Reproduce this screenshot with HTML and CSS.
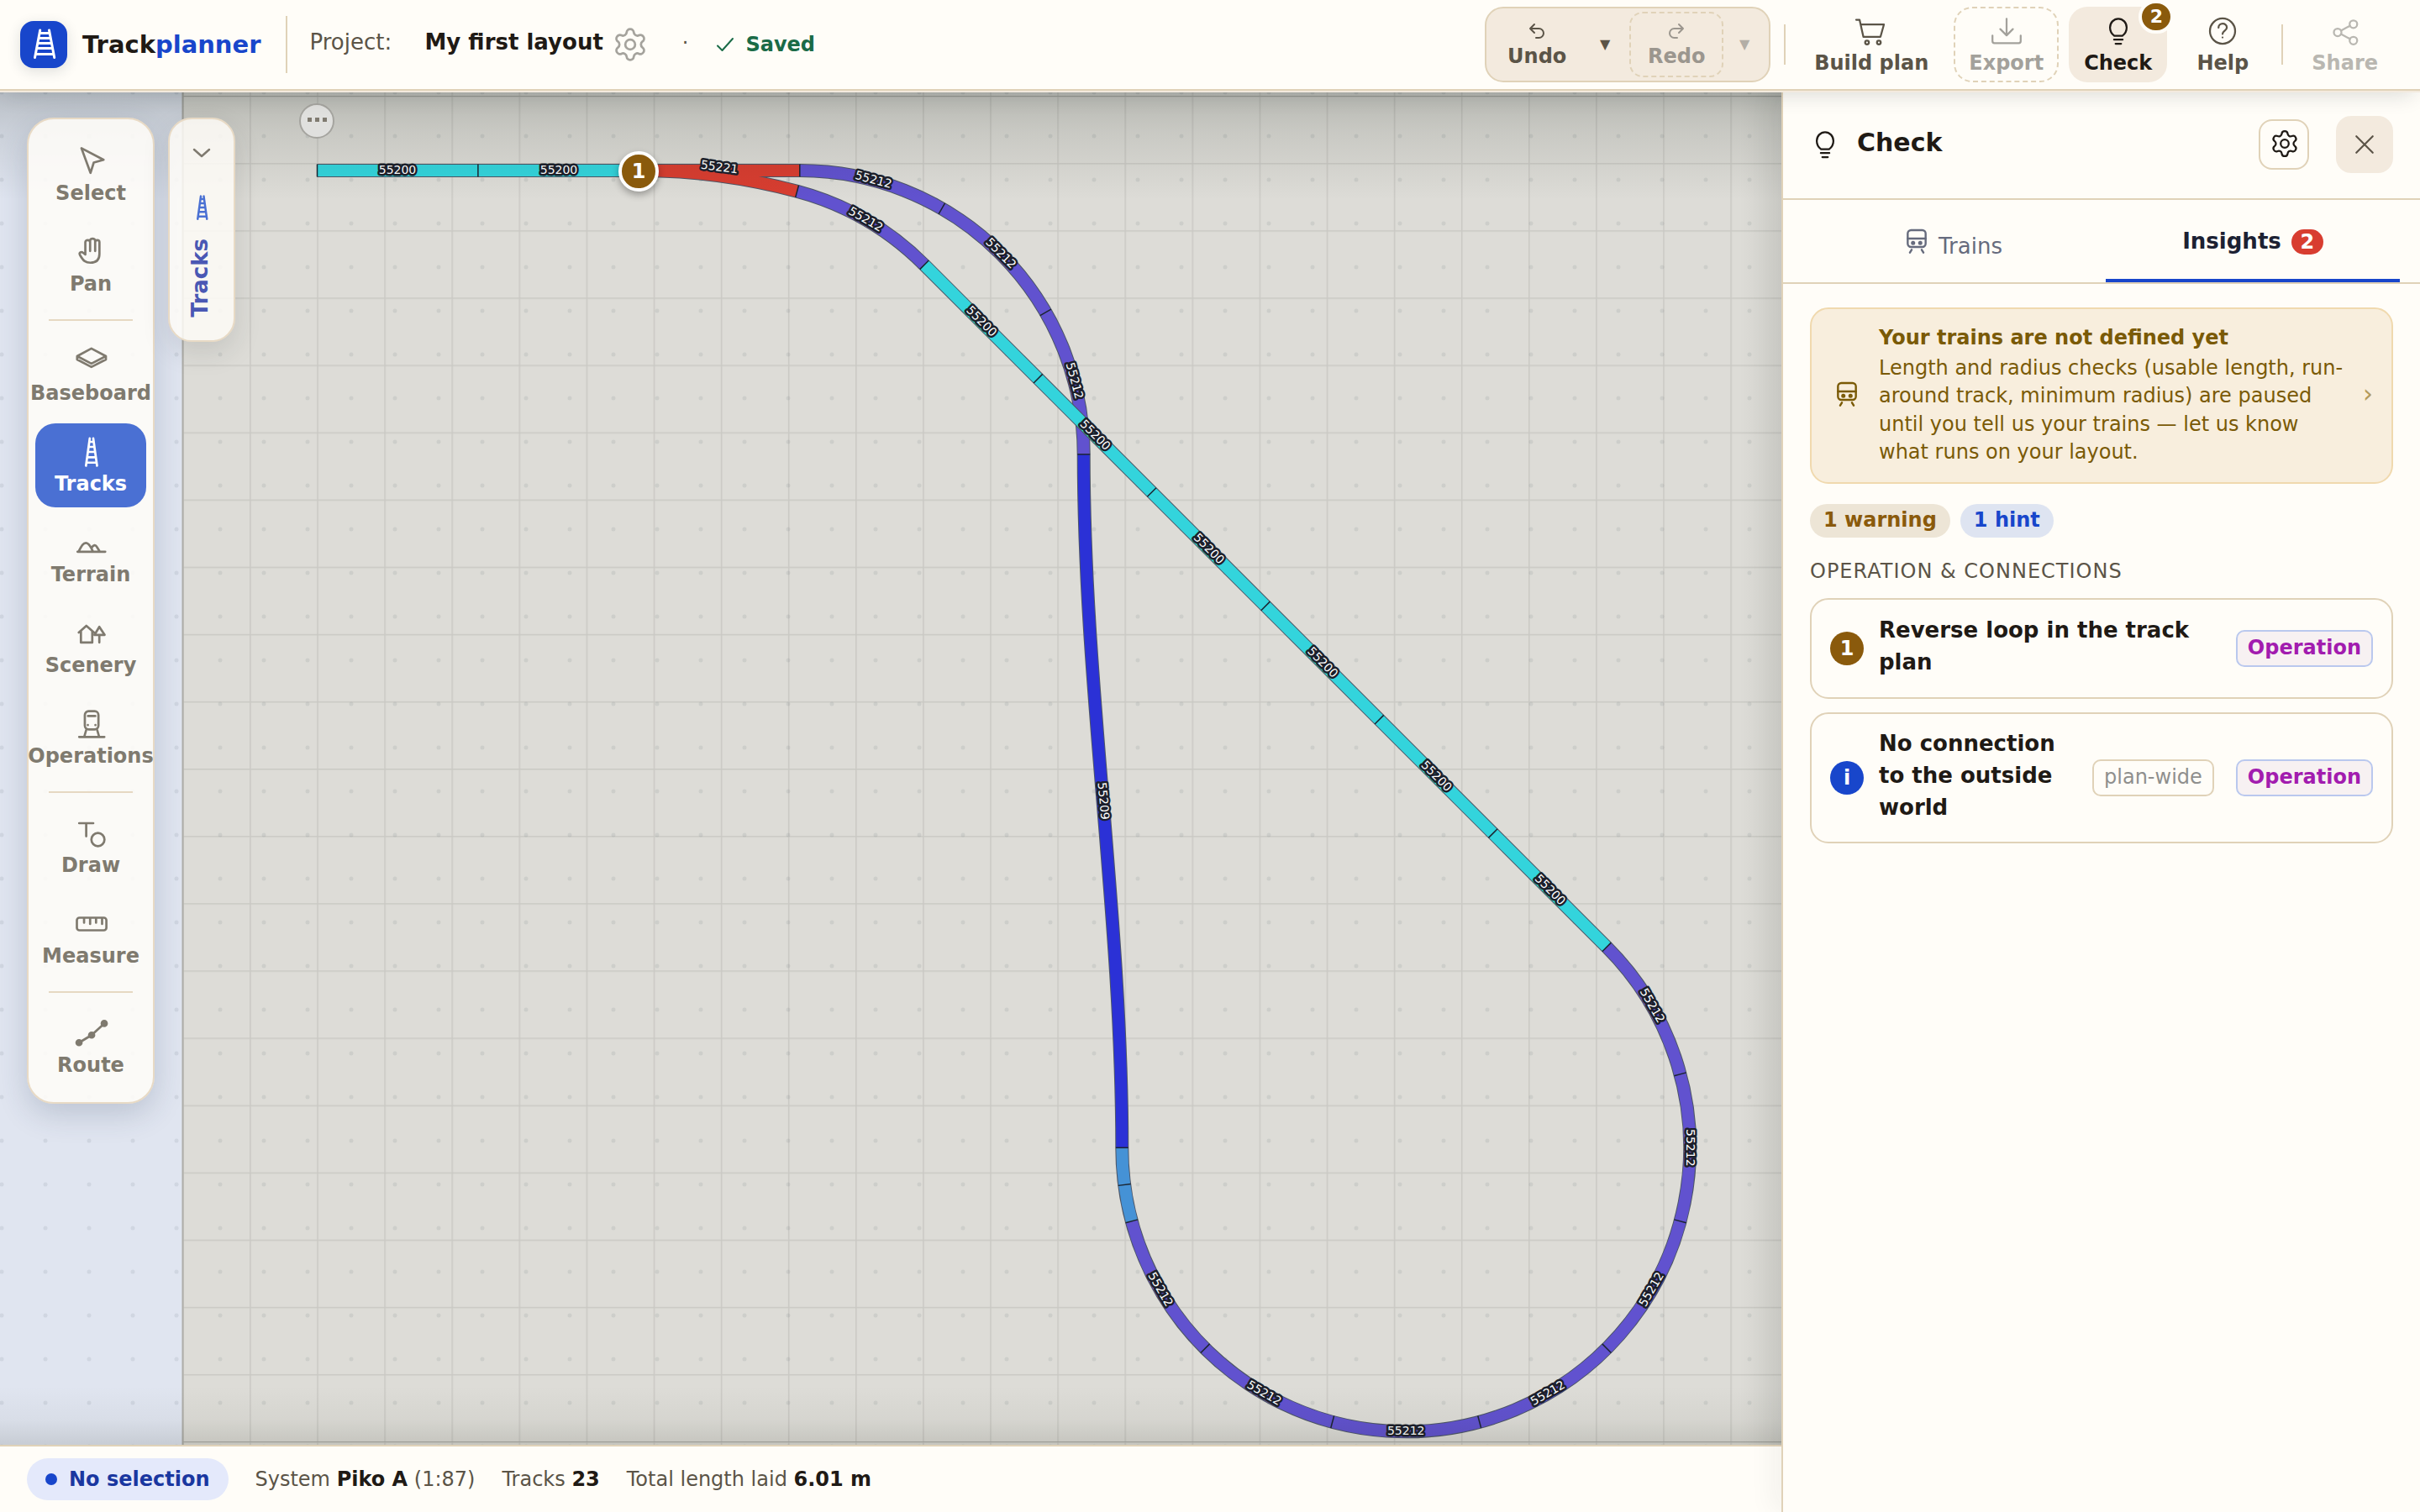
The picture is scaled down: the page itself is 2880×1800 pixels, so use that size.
FILE: index.html
```html
<!DOCTYPE html>
<html lang="en">
<head>
<meta charset="utf-8">
<title>Trackplanner – My first layout</title>
<meta name="viewport" content="width=device-width, initial-scale=1">
<link rel="stylesheet" href="styles.css">
</head>
<body>
<svg class="sprite" aria-hidden="true">
  <symbol id="i-track" viewBox="0 0 24 24"><path d="M11.2 1.3 8.2 23M14 1.3 17 23M11 4h3.4M10.4 8h4.4M9.8 12h5.6M9.2 16.200h6.800M8.600 20.500h8"/></symbol>
  <symbol id="i-gear" viewBox="0 0 24 24"><path d="M9.671 4.136a2.34 2.34 0 0 1 4.659 0 2.34 2.34 0 0 0 3.319 1.915 2.34 2.34 0 0 1 2.33 4.033 2.34 2.34 0 0 0 0 3.831 2.34 2.34 0 0 1-2.33 4.033 2.34 2.34 0 0 0-3.319 1.915 2.34 2.34 0 0 1-4.659 0 2.34 2.34 0 0 0-3.32-1.915 2.34 2.34 0 0 1-2.33-4.033 2.34 2.34 0 0 0 0-3.831A2.34 2.34 0 0 1 6.35 6.051a2.34 2.34 0 0 0 3.319-1.915"/><circle cx="12" cy="12" r="3.2"/></symbol>
  <symbol id="i-bulb" viewBox="0 0 24 24"><path d="M8.800 15.800C6.600 14.200 5.400 11.800 5.400 9.200a6.600 7 0 0 1 13.200 0c0 2.600-1.200 5-3.400 6.600zM8.600 18.800h6.800M9.800 22h4.400"/></symbol>
  <symbol id="i-train" viewBox="0 0 24 24"><rect x="4" y="3" width="16" height="15" rx="3"/><path d="M4 10.500h16M7.500 20.500 6 23M16.500 20.500 18 23"/><circle cx="8.800" cy="14.500" r="1"/><circle cx="15.200" cy="14.500" r="1"/></symbol>
</svg>

<div class="app">
  <header class="topbar">
    <a class="brand" href="#">
      <svg class="brand-mark" viewBox="0 0 56 56" aria-hidden="true"><path d="M23.700 11 17.500 43.500M34.500 11l6.200 32.500M23 14.600h12M22 20.600h14M21 26.600h16.500M20 32.600h18.500M18.600 39.500h21"/></svg>
      <span>Track<span class="brand-accent">planner</span></span>
    </a>
    <div class="project">
      <span class="project-label">Project:</span>
      <span class="project-name">My first layout</span>
      <button class="gear" type="button" aria-label="Project settings"><svg class="icon"><use href="#i-gear"/></svg></button>
      <span class="dot-sep">·</span>
      <span class="saved"><svg viewBox="0 0 24 24" aria-hidden="true"><path d="m3 13.500 5.500 5.500L21 5"/></svg>Saved</span>
    </div>
    <nav class="actions" aria-label="Plan actions">
      <div class="history">
        <button class="hist" type="button"><svg class="icon" viewBox="0 0 24 24"><path d="M9 14 4 9l5-5M4 9h10.500a5.500 5.500 0 0 1 0 11H11"/></svg>Undo</button>
        <button class="caret" type="button" aria-label="Undo list">▼</button>
        <button class="hist hist-off" type="button" disabled><svg class="icon" viewBox="0 0 24 24"><path d="m15 14 5-5-5-5M20 9H9.500a5.500 5.500 0 0 0 0 11H13"/></svg>Redo</button>
        <button class="caret" type="button" aria-label="Redo list" disabled>▼</button>
      </div>
      <span class="rule"></span>
      <div class="group">
        <button class="action" type="button"><svg class="icon" viewBox="0 0 24 24"><path d="M0 3h2.700l3 13.500h13.600L22 6.800H3.600"/><circle cx="8.600" cy="21" r="1.500"/><circle cx="18" cy="21" r="1.500"/></svg>Build plan</button>
        <button class="action action-dashed" type="button" disabled><svg class="icon" viewBox="0 0 24 24"><path d="M12 2.200v13M7 10.400l5 5 5-5M.800 15.500v4.500q0 1.500 1.500 1.500h19.400q1.500 0 1.500-1.500v-4.500"/></svg>Export</button>
        <button class="action action-on" type="button"><svg class="icon"><use href="#i-bulb"/></svg>Check<span class="count">2</span></button>
        <button class="action" type="button"><svg class="icon" viewBox="0 0 24 24"><circle cx="12" cy="12" r="10"/><path d="M8.800 9.300c0-4.200 6.600-4.200 6.600-.200 0 2.600-3.400 2.600-3.400 5.200"/><path d="M12 17v.010"/></svg>Help</button>
      </div>
      <span class="rule"></span>
      <button class="action" type="button" disabled><svg class="icon" viewBox="0 0 24 24"><circle cx="18.500" cy="6.500" r="3"/><circle cx="6" cy="13" r="3"/><circle cx="18.500" cy="19.500" r="3"/><path d="M8.600 11.600 15.800 7.800M8.600 14.400l7.200 3.800"/></svg>Share</button>
    </nav>
  </header>

  <div class="workspace">
    <section class="plan-side">
      <main class="stage">
        <svg class="canvas" aria-label="Track plan">
          <defs>
            <pattern id="grid" width="80.100" height="80.100" patternUnits="userSpaceOnUse" x="217" y="6"><path class="grid-line" d="M.800 0V81M0 .800H81"/></pattern>
            <pattern id="dots" width="52" height="52" patternUnits="userSpaceOnUse" x="-24" y="-24"><circle class="dot" cx="26" cy="26" r="2.500"/></pattern>
            <path id="joint" d="M0-7.500V7.500"/>
          </defs>
          <rect class="board" x="217" width="100%" height="100%"/>
          <rect fill="url(#grid)" x="217" width="100%" height="100%"/>
          <path class="board-edge" d="M217.500 0V2000"/>
          <path class="board-edge board-edge-soft" d="M217 6.500H4000M217 1608.500H4000"/>
          <rect fill="url(#dots)" width="100%" height="100%"/>
          <g transform="translate(0 -108)">
            <g class="rail rail-edge">
              <path d="M377.500 203H951.800"/><path d="M760.400 203A727.300 727.300 0 0 1 948.600 227.800"/>
              <path d="M951.800 203A337.900 337.900 0 0 1 1289.700 540.900"/>
              <path d="M1289.700 540.900C1289.700 816 1335.300 1091 1335.300 1366.300"/>
              <path d="M948.600 227.800A337.900 337.900 0 0 1 1100 315.300"/>
              <path d="M1912.100 1127.400A337.900 337.900 0 1 1 1335.300 1366.300"/>
            </g>
            <path class="rail cyan" d="M377.500 203H760.400"/>
            <path class="rail red" d="M760.400 203H951.800M760.400 203A727.300 727.300 0 0 1 948.600 227.800"/>
            <path class="rail violet" d="M951.800 203A337.900 337.900 0 0 1 1289.700 540.900"/>
            <path class="rail blue" d="M1289.700 540.900C1289.700 816 1335.300 1091 1335.300 1366.300"/>
            <path class="rail sky" d="M1346.800 1453.800A337.900 337.900 0 0 1 1335.300 1366.300"/>
            <path class="rail violet" d="M948.600 227.800A337.900 337.900 0 0 1 1100 315.300"/>
            <path class="rail violet" d="M1912.100 1127.400A337.900 337.900 0 1 1 1346.800 1453.800"/>
            <path class="rail rail-edge" d="M1100 315.300 1912.100 1127.400"/>
            <path class="rail cyan" d="M1100 315.300 1912.100 1127.400"/>
            <g class="joints">
              <use href="#joint" transform="translate(377.500 203)"/><use href="#joint" transform="translate(568.900 203)"/><use href="#joint" transform="translate(951.800 203)"/>
              <use href="#joint" transform="translate(948.600 227.800) rotate(15)"/><use href="#joint" transform="translate(1120.800 248.300) rotate(30)"/><use href="#joint" transform="translate(1244.400 371.900) rotate(60)"/><use href="#joint" transform="translate(1289.700 540.900) rotate(90)"/>
              <use href="#joint" transform="translate(1100 315.300) rotate(45)"/><use href="#joint" transform="translate(1235.400 450.700) rotate(45)"/><use href="#joint" transform="translate(1370.700 586) rotate(45)"/><use href="#joint" transform="translate(1506.100 721.400) rotate(45)"/><use href="#joint" transform="translate(1641.400 856.700) rotate(45)"/><use href="#joint" transform="translate(1776.800 992.100) rotate(45)"/><use href="#joint" transform="translate(1912.100 1127.400) rotate(45)"/>
              <use href="#joint" transform="translate(1999.600 1278.800) rotate(75)"/><use href="#joint" transform="translate(1999.600 1453.800) rotate(105)"/><use href="#joint" transform="translate(1912.100 1605.200) rotate(135)"/><use href="#joint" transform="translate(1760.700 1692.700) rotate(165)"/><use href="#joint" transform="translate(1585.700 1692.700) rotate(15)"/><use href="#joint" transform="translate(1434.300 1605.200) rotate(45)"/><use href="#joint" transform="translate(1346.800 1453.800) rotate(75)"/><use href="#joint" transform="translate(1338.200 1410.400) rotate(82.500)"/><use href="#joint" transform="translate(1335.300 1366.300) rotate(90)"/>
            </g>
            <g class="part-no">
              <text transform="translate(473 203)">55200</text><text transform="translate(665 203)">55200</text>
              <text transform="translate(856 199.500) rotate(7.500)">55221</text>
              <text transform="translate(1039.300 214.500) rotate(15)">55212</text><text transform="translate(1190.700 302) rotate(45)">55212</text><text transform="translate(1278.200 453.400) rotate(75)">55212</text>
              <text transform="translate(1030 261.600) rotate(30)">55212</text>
              <text transform="translate(1167.700 383) rotate(45)">55200</text><text transform="translate(1303 518.300) rotate(45)">55200</text><text transform="translate(1438.400 653.700) rotate(45)">55200</text><text transform="translate(1573.700 789) rotate(45)">55200</text><text transform="translate(1709.100 924.400) rotate(45)">55200</text><text transform="translate(1844.400 1059.700) rotate(45)">55200</text>
              <text transform="translate(1312.500 953.600) rotate(85)">55209</text>
              <text transform="translate(1965.800 1197.400) rotate(60)">55212</text><text transform="translate(2011.100 1366.300) rotate(90)">55212</text><text transform="translate(1965.800 1535.300) rotate(-60)">55212</text><text transform="translate(1842.200 1658.900) rotate(-30)">55212</text><text transform="translate(1673.200 1704.200)">55212</text><text transform="translate(1504.200 1658.900) rotate(30)">55212</text><text transform="translate(1380.600 1535.300) rotate(60)">55212</text>
            </g>
          </g>
        </svg>
        <div class="shade"></div>
        <button class="more" type="button" aria-label="Board menu"><span></span><span></span><span></span></button>
        <button class="marker" type="button">1</button>

        <nav class="tools" aria-label="Tools">
          <button class="tool" type="button"><svg class="icon" viewBox="0 0 24 24"><path d="M4.600 1.600 22.200 10.800 14.400 13 11.800 21.200z"/></svg>Select</button>
          <button class="tool" type="button"><svg class="icon" viewBox="0 0 24 24"><path d="M7.700 14V4.200c0-2.200 3.600-2.200 3.800 0v7M11.500 10.500V3c0-2.200 3.800-2.200 4 0v8.200M15.500 4.200c.200-2.200 3.300-2.200 3.400 0v9.300c0 5-3 7-7.200 7-3.800 0-5.400-1.200-8.300-6.200-.900-1.800 1.200-2.900 2.400-1.800l1.900 1.500"/></svg>Pan</button>
          <hr>
          <button class="tool" type="button"><svg class="icon" viewBox="0 0 24 24"><path d="M12.500 1.900 24 8l-11.500 5.900L1.200 8zM1.200 8v2.700l11.300 5.900L24 10.700V8"/></svg>Baseboard</button>
          <button class="tool tool-on" type="button"><svg class="icon"><use href="#i-track"/></svg>Tracks</button>
          <button class="tool" type="button"><svg class="icon" viewBox="0 0 24 24"><path d="M1.500 19.200h22M2.600 18.600C5 14 6 12.300 8.200 12.300s3.600 2.400 5.300 6.300M12.500 16.500c1.600-3 3.300-3 4.300-1.200l2 3.200"/></svg>Terrain</button>
          <button class="tool" type="button"><svg class="icon" viewBox="0 0 24 24"><path d="M2.500 11.300 8.500 6l6.300 5.500M4.200 10.300v9h9v-9M18.800 6.800 15 13.200h8zM18.800 13.200v6"/></svg>Scenery</button>
          <button class="tool" type="button"><svg class="icon" viewBox="0 0 24 24"><rect x="7.300" y="1.800" width="10.800" height="14.400" rx="3"/><path d="M9.800 5.600h5.800M9.700 12.800v.010M15.700 12.800v.010M8.300 17l-1.300 4.500M17.200 17l1.300 4.500M2.800 22.200h20"/></svg>Operations</button>
          <hr>
          <button class="tool" type="button"><svg class="icon" viewBox="0 0 24 24"><path d="M2.800 4h11.200M8.400 4v10.400"/><circle cx="17.700" cy="17" r="5.200"/></svg>Draw</button>
          <button class="tool" type="button"><svg class="icon" viewBox="0 0 24 24"><rect x="1" y="7" width="23.400" height="10" rx="2"/><path d="M6.700 7.500v3.500M11.500 7.500v4.500M16.200 7.500v3.500M21 7.500v4.500"/></svg>Measure</button>
          <hr>
          <button class="tool" type="button"><svg class="icon" viewBox="0 0 24 24"><path d="M2.700 19.500 12.700 13.500 22.700 4.300"/><g fill="currentColor"><circle cx="2.700" cy="19.500" r="2"/><circle cx="12.700" cy="13.500" r="2"/><circle cx="22.700" cy="4.300" r="2"/></g></svg>Route</button>
        </nav>
        <button class="flyout" type="button">
          <svg class="icon chevron" viewBox="0 0 24 24"><path d="m3 8 9 8 9-8"/></svg>
          <svg class="icon flyout-icon"><use href="#i-track"/></svg>
          <span class="flyout-text">Tracks</span>
        </button>
      </main>
      <footer class="status">
        <span class="selection">No selection</span>
        <span>System <b>Piko A</b> (1:87)</span>
        <span>Tracks <b>23</b></span>
        <span>Total length laid <b>6.01 m</b></span>
      </footer>
    </section>

    <aside class="panel">
      <div class="panel-head">
        <svg class="icon"><use href="#i-bulb"/></svg>
        <h2>Check</h2>
        <button class="panel-gear" type="button" aria-label="Check settings"><svg class="icon"><use href="#i-gear"/></svg></button>
        <button class="panel-close" type="button" aria-label="Close"><svg class="icon" viewBox="0 0 24 24"><path d="m3 3 18 18M21 3 3 21"/></svg></button>
      </div>
      <div class="tabs">
        <button class="tab" type="button"><svg class="icon"><use href="#i-train"/></svg>Trains</button>
        <button class="tab tab-on" type="button">Insights<span class="tab-count">2</span></button>
      </div>
      <div class="panel-body">
        <button class="notice" type="button">
          <span class="lead"><svg class="icon"><use href="#i-train"/></svg></span>
          <span class="notice-text"><b>Your trains are not defined yet</b><span>Length and radius checks (usable length, run-around track, minimum radius) are paused until you tell us your trains — let us know what runs on your layout.</span></span>
          <span class="notice-go">›</span>
        </button>
        <div class="chips"><span class="chip chip-warn">1 warning</span><span class="chip chip-hint">1 hint</span></div>
        <h3>Operation &amp; connections</h3>
        <div class="issues">
          <button class="issue" type="button"><span class="lead lead-warn">1</span><span class="issue-title">Reverse loop in the track plan</span><span class="tag tag-op">Operation</span></button>
          <button class="issue" type="button"><span class="lead lead-info">i</span><span class="issue-title">No connection to the outside world</span><span class="tag">plan-wide</span><span class="tag tag-op">Operation</span></button>
        </div>
      </div>
    </aside>
  </div>
</div>
</body>
</html>
```

FILE: styles.css
```css
:root {
  --paper: #fffdf8;
  --sand: #f3eade;
  --line: #e0d2b8;
  --ink: #1f1a15;
  --muted: #5b5447;
  --blue: #1846cb;
  --brown: #8a5a0c;
}

* { box-sizing: border-box; }

body {
  margin: 0;
  background: var(--paper);
  color: var(--ink);
  font: 24px/28px "DejaVu Sans", sans-serif;
}

button {
  margin: 0;
  padding: 0;
  border: 0;
  background: none;
  color: inherit;
  font: inherit;
  white-space: nowrap;
}

h2, h3 { margin: 0; }

.sprite { position: absolute; width: 0; height: 0; }

.icon {
  flex: none;
  width: 36px;
  height: 36px;
  overflow: visible;
  fill: none;
  stroke: currentColor;
  stroke-width: 1.5;
  stroke-linecap: round;
  stroke-linejoin: round;
}

.app {
  display: flex;
  flex-direction: column;
  min-height: 100vh;
}

/* Top bar */
.topbar {
  position: relative;
  z-index: 2;
  display: flex;
  align-items: center;
  height: 108px;
  padding: 0 32px 0 24px;
  border-bottom: 2px solid var(--line);
  background: var(--paper);
  box-shadow: 0 2px 0 var(--sand), 0 12px 24px -8px rgba(20, 30, 40, .16);
}

.brand {
  display: flex;
  align-items: center;
  gap: 18px;
  padding-right: 30px;
  color: var(--ink);
  font-size: 29px;
  font-weight: 700;
  text-decoration: none;
}

.brand-accent { color: var(--blue); }

.brand-mark {
  width: 56px;
  height: 56px;
  border-radius: 16px;
  background: var(--blue);
  box-shadow: 0 4px 16px rgba(30, 40, 60, .14);
  fill: none;
  stroke: #fff;
  stroke-width: 3;
  stroke-linecap: round;
}

.project {
  display: flex;
  align-items: center;
  height: 68px;
  padding-left: 26px;
  border-left: 2px solid var(--line);
}

.project-label, .project-name {
  padding-bottom: 6px;
  font-size: 26px;
}

.project-label { width: 137px; color: var(--muted); }
.project-name { font-weight: 700; }

.gear {
  display: flex;
  margin-left: 10px;
  color: #a5a39d;
}

.gear .icon { width: 44px; height: 44px; }

.dot-sep { margin: 0 32px 4px 40px; color: var(--muted); }

.saved {
  display: flex;
  align-items: center;
  gap: 12px;
  color: #1a6b47;
  font-weight: 700;
}

.saved svg {
  width: 24px;
  height: 24px;
  fill: none;
  stroke: currentColor;
  stroke-width: 2;
  stroke-linecap: round;
  stroke-linejoin: round;
}

.actions {
  display: flex;
  align-items: center;
  gap: 16px;
  margin-left: auto;
  color: var(--muted);
}

.history {
  display: flex;
  height: 90px;
  padding: 4px;
  border: 2px solid var(--line);
  border-radius: 22px;
  background: var(--sand);
}

.hist, .action, .tool {
  display: flex;
  flex-direction: column;
  align-items: center;
  justify-content: center;
  font-weight: 700;
}

.action, .tool { gap: 6px; }

.hist { gap: 4px; width: 112px; border-radius: 16px; }
.hist .icon { width: 24px; height: 24px; stroke-width: 2; }
.hist-off { margin-left: 4px; border: 2px dashed var(--line); color: #9b968e; }
.caret { width: 50px; font-size: 16px; }
.caret:disabled { color: #b3aea6; }

.rule { width: 2px; height: 48px; background: var(--line); }

.group { display: flex; gap: 12px; }

.action {
  position: relative;
  min-width: 108px;
  height: 90px;
  padding: 2px 16px 0;
  border: 2px solid transparent;
  border-radius: 22px;
}

.action:disabled { color: #b9b7b1; }
.action-dashed:disabled { border: 2px dashed var(--line); color: #a3a19b; }
.action-on { background: var(--sand); color: var(--ink); }

.count {
  position: absolute;
  top: -10px;
  right: -10px;
  min-width: 42px;
  height: 40px;
  border: 4px solid var(--paper);
  border-radius: 20px;
  background: var(--brown);
  color: #fff;
  font-size: 22px;
  line-height: 32px;
}

/* Work area */
.workspace { display: flex; flex: 1; }

.plan-side {
  display: flex;
  flex: 1;
  flex-direction: column;
  min-width: 0;
}

.stage {
  position: relative;
  display: flex;
  flex: 1;
  align-items: flex-start;
  gap: 16px;
  padding: 32px;
  overflow: hidden;
  background: #e0e5f0;
}

.canvas, .shade {
  position: absolute;
  top: 0;
  left: 0;
  width: 100%;
  height: 100%;
}

.shade {
  pointer-events: none;
  background:
    linear-gradient(to bottom, rgba(25, 35, 25, .2), rgba(25, 35, 25, .1) 50px, transparent 130px) top / 100% 130px no-repeat,
    linear-gradient(to top, rgba(35, 40, 25, .13), rgba(35, 40, 25, .04) 30px, transparent 70px) bottom / 100% 70px no-repeat,
    linear-gradient(to left, rgba(25, 35, 25, .07), transparent) right / 50px 100% no-repeat;
}

.board { fill: #dddcd7; }
.grid-line { fill: none; stroke: #cac9c4; stroke-width: 1.5; }
.board-edge { stroke: #aeada8; stroke-width: 2; }
.board-edge-soft { stroke-width: 1; }
.dot { fill: rgba(70, 75, 85, .1); }

.rail { fill: none; stroke-width: 14; }
.rail-edge { stroke: #4d5666; stroke-width: 16; }
.cyan { stroke: #33d4dc; }
.red { stroke: #d83d30; }
.violet { stroke: #6152cf; }
.blue { stroke: #2b31d6; }
.sky { stroke: #4592d6; }
.joints { stroke: #1b2430; stroke-width: 1.5; }

.part-no text {
  fill: #fff;
  stroke: #1c1f2b;
  stroke-width: 5;
  stroke-linejoin: round;
  paint-order: stroke;
  font-size: 14px;
  text-anchor: middle;
  dominant-baseline: middle;
}

.more {
  position: absolute;
  top: 15px;
  left: 356px;
  display: flex;
  align-items: center;
  justify-content: center;
  gap: 4px;
  width: 42px;
  height: 42px;
  padding-bottom: 4px;
  border: 2px solid #a5a49f;
  border-radius: 50%;
  background: #e0e0de;
}

.more span { width: 5px; height: 5px; background: #7f7a70; }

.marker {
  position: absolute;
  top: 72px;
  left: 736px;
  width: 48px;
  height: 48px;
  border: 4px solid #fff;
  border-radius: 50%;
  background: var(--brown);
  box-shadow: 0 4px 8px rgba(0, 0, 0, .3);
  color: #fff;
  font-weight: 700;
}

.tools {
  position: relative;
  display: flex;
  flex-direction: column;
  gap: 8px;
  width: 152px;
  padding: 16px 8px;
  border: 2px solid #e8dac5;
  border-radius: 32px;
  background: rgba(255, 253, 248, .87);
  box-shadow: 0 12px 36px rgba(40, 60, 90, .2);
  color: #7f7a6f;
}

.tool { height: 100px; padding-top: 2px; border-radius: 24px; }
.tool .icon { stroke-width: 1.8; }
.tool-on { background: #4a70d3; color: #fff; }

.tools hr {
  width: 100px;
  height: 2px;
  margin: 6px auto;
  border: 0;
  background: #e6d8c2;
}

.flyout {
  position: relative;
  display: flex;
  flex-direction: column;
  align-items: center;
  width: 80px;
  padding: 28px 0;
  border: 2px solid #e8dac5;
  border-radius: 28px;
  background: rgba(255, 253, 248, .83);
  box-shadow: 0 12px 32px rgba(40, 50, 50, .13);
  color: #7f7a6f;
}

.chevron { width: 24px; height: 24px; stroke-width: 2.5; }
.flyout-icon { width: 30px; height: 30px; margin: 38px 0 22px; stroke-width: 2; color: #4a70d3; }

.flyout-text {
  margin-right: 4px;
  color: #4a58b4;
  font-size: 26px;
  font-weight: 700;
  writing-mode: vertical-rl;
  transform: rotate(180deg);
}

.status {
  position: relative;
  display: flex;
  align-items: center;
  gap: 32px;
  height: 80px;
  padding: 0 32px;
  border-top: 2px solid var(--line);
  background: var(--paper);
  color: var(--muted);
}

.status b { color: var(--ink); }

.selection {
  display: flex;
  align-items: center;
  gap: 14px;
  height: 50px;
  padding: 0 22px;
  border-radius: 25px;
  background: #e4e9fb;
  color: #1a37a0;
  font-weight: 700;
}

.selection::before {
  width: 14px;
  height: 14px;
  border-radius: 50%;
  background: var(--blue);
  content: "";
}

/* Check panel */
.panel {
  position: relative;
  z-index: 1;
  width: 760px;
  border-left: 2px solid var(--line);
  background: var(--paper);
  box-shadow: -8px 0 32px rgba(30, 40, 30, .06);
}

.panel-head {
  display: flex;
  align-items: center;
  height: 130px;
  padding: 0 32px;
  border-bottom: 2px solid var(--line);
}

.panel-head h2 {
  margin: 0 auto 4px 20px;
  font-size: 30px;
}

.panel-gear {
  display: grid;
  place-items: center;
  width: 60px;
  height: 60px;
  margin-right: 32px;
  padding: 0 0 2px 2px;
  border: 2px solid var(--line);
  border-radius: 16px;
}

.panel-close {
  display: grid;
  place-items: center;
  width: 68px;
  height: 68px;
  border-radius: 18px;
  background: var(--sand);
  color: var(--muted);
}

.panel-close .icon { width: 26px; height: 26px; stroke-width: 2; }

.tabs {
  display: grid;
  grid-template-columns: 1fr 350px;
  gap: 4px;
  height: 100px;
  padding: 0 24px;
  border-bottom: 2px solid var(--line);
}

.tab {
  padding-top: 6px;
  border-bottom: 4px solid transparent;
  color: #666b7d;
  font-size: 26px;
}

.tab .icon { width: 32px; height: 32px; margin-right: 10px; stroke-width: 1.8; vertical-align: baseline; }
.tab-on { border-color: var(--blue); color: #1c2133; font-weight: 700; }

.tab-count {
  display: inline-block;
  width: 38px;
  height: 30px;
  margin-left: 12px;
  border-radius: 15px;
  background: #d83d30;
  color: #fff;
  font-size: 24px;
  line-height: 30px;
}

.panel-body { padding: 28px 32px; }

.notice, .issue {
  display: flex;
  align-items: center;
  gap: 18px;
  width: 100%;
  padding: 18px 22px;
  border: 2px solid var(--line);
  border-radius: 22px;
  text-align: left;
  white-space: normal;
}

.notice {
  border-color: #f0d9ae;
  background: #f8eedd;
  color: #7a5a06;
}

.lead {
  display: grid;
  flex: none;
  place-items: center;
  width: 40px;
  height: 40px;
  border-radius: 50%;
  color: #fff;
  font-weight: 700;
}

.lead-warn { background: var(--brown); }
.lead-info { background: var(--blue); }
.notice .lead { color: #7a5a06; }
.notice .icon { width: 32px; height: 32px; margin-bottom: 6px; stroke-width: 1.8; }

.notice-text {
  display: flex;
  flex: 1;
  flex-direction: column;
  gap: 2px;
  line-height: 1.4;
}

.notice-go {
  margin-bottom: 4px;
  color: #b39a5c;
  font-size: 30px;
}

.chips {
  display: flex;
  gap: 12px;
  margin: 24px 0;
}

.chip {
  height: 40px;
  padding: 0 16px;
  border-radius: 20px;
  font-weight: 700;
  line-height: 38px;
}

.chip-warn { background: #ede5d6; color: var(--brown); }
.chip-hint { background: #dee4f1; color: var(--blue); }

h3 {
  margin-bottom: 16px;
  color: var(--muted);
  font-size: 24px;
  font-weight: 400;
  letter-spacing: 1px;
  line-height: 32px;
  text-transform: uppercase;
}

.issues { display: grid; gap: 16px; }
.issue { min-height: 120px; padding: 16px 22px; }

.issue-title {
  flex: 1;
  margin-bottom: 6px;
  font-size: 26px;
  font-weight: 700;
  line-height: 38px;
}

.tag {
  margin-left: 8px;
  padding: 5px 12px 7px;
  border: 2px solid var(--line);
  border-radius: 10px;
  color: #8f8f8d;
  white-space: nowrap;
}

.tag-op {
  border-color: #bac8ee;
  background: #f7f1f2;
  color: #a21caf;
  font-weight: 700;
}
```
